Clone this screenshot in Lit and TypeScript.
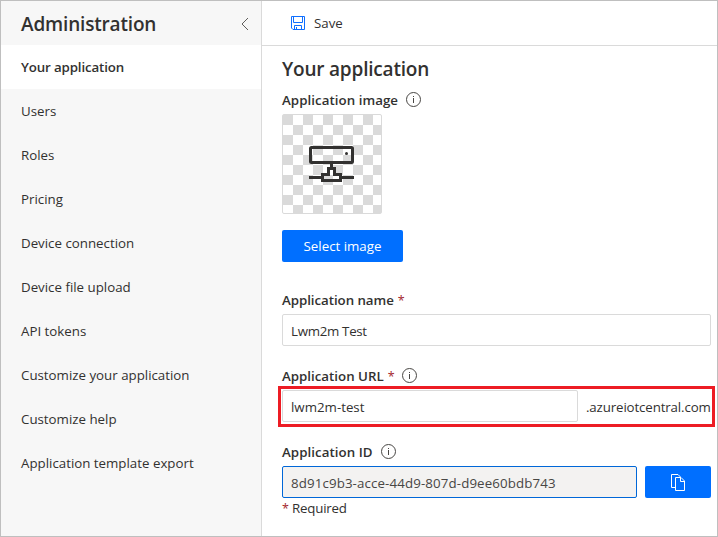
import { LitElement, html, css, svg } from "lit";
import { customElement, property } from "lit/decorators.js";

const SECTIONS = [
  "Your application",
  "Users",
  "Roles",
  "Pricing",
  "Device connection",
  "Device file upload",
  "API tokens",
  "Customize your application",
  "Customize help",
  "Application template export",
];

@customElement("info-icon")
class InfoIcon extends LitElement {
  static styles = css`
    :host { display: block; width: 15px; height: 15px; }
    .icon { display: block; }
  `;
  render() {
    return html`<svg class="icon" width="15" height="15" viewBox="0 0 15 15" fill="none" stroke="#484644">
      <circle cx="7.5" cy="7.5" r="7" />
      <path d="M7.5 6V11M7.5 4V5" />
    </svg>`;
  }
}

@customElement("field-label")
class FieldLabel extends LitElement {
  @property() text = "";
  @property({ type: Boolean }) required = false;
  @property({ type: Boolean }) info = false;
  static styles = css`
    :host { display: flex; align-items: center; height: 20px; font-weight: 600; }
    .star { color: #a4262c; margin-left: 4px; width: 6px; padding-top: 1px; font-weight: 400; font-size: 12.5px; }
    .info { margin: -1px 0 0 8px; }
  `;
  render() {
    return html`<span class="text">${this.text}</span>
      ${this.required ? html`<span class="star">*</span>` : ""}
      ${this.info ? html`<info-icon class="info"></info-icon>` : ""}`;
  }
}

@customElement("app-root")
class AppRoot extends LitElement {
  static styles = css`
    :host {
      display: flex;
      box-sizing: border-box;
      width: 718px;
      height: 537px;
      border: 1px solid #bfbfbf;
      background: #fff;
      color: #323130;
      font: 13.3px/20px "Open Sans", "Noto Sans", sans-serif;
    }
    * { box-sizing: border-box; }
    svg { display: block; }
    .side { width: 261px; background: #f7f7f7; border-right: 1px solid #dadada; flex: none; }
    .head { display: flex; align-items: center; justify-content: space-between; height: 44px; padding: 2px 12px 0 20px; }
    .title { margin: 0; font-size: 19px; line-height: 28px; font-weight: 600; letter-spacing: -0.17px; }
    .item { display: flex; align-items: center; height: 44px; padding-left: 20px; }
    .item.active { background: #fff; font-weight: 600; letter-spacing: -0.13px; }
    .main { flex: 1; min-width: 0; display: flex; flex-direction: column; }
    .bar { display: flex; align-items: center; gap: 9px; height: 45px; padding-left: 29px; border-bottom: 1px solid #dadada; }
    .body { padding: 9px 6px 0 20px; }
    .name { margin: 0 0 7px; font-size: 19px; line-height: 28px; font-weight: 600; letter-spacing: -0.2px; }
    .thumb {
      width: 100px; height: 100px; margin-top: 4px; border: 1px solid #dadada; border-radius: 2px;
      background: conic-gradient(#fff 25%, #dadada 0 50%, #fff 0 75%, #dadada 0) 0 0 / 20px 20px;
    }
    .pick {
      display: flex; align-items: center; justify-content: center; width: 121px; height: 32px;
      margin: 16px 0 28px; border-radius: 2px; background: #006fff; color: #fff;
    }
    .label-wide { letter-spacing: 0.05px; }
    .label-tight { letter-spacing: -0.05px; }
    .input {
      display: flex; align-items: center; height: 32px; padding: 2px 8px 0;
      border: 1px solid #dadada; border-radius: 2px; background: #fff;
    }
    .value-tight { letter-spacing: -0.3px; }
    .field { margin: 4px 0 20px; }
    .url { position: relative; display: flex; align-items: center; }
    .url .input { flex: none; width: 296px; margin-right: 8px; }
    .suffix { padding-top: 1px; letter-spacing: -0.13px; }
    .frame { position: absolute; inset: -4px -4px -5px -4px; border: 3px solid #ed1c24; }
    .row { display: flex; gap: 8px; margin-top: 4px; }
    .id { flex: 1; border-color: #0067d8; background: #f3f2f1; color: #484644; letter-spacing: 0.12px; }
    .copy { display: flex; align-items: center; justify-content: center; width: 66px; height: 32px; border-radius: 2px; background: #006fff; }
    .note { display: flex; gap: 5px; letter-spacing: -0.2px; }
    .mark { width: 5px; padding-top: 1px; color: #a4262c; font-size: 12.5px; }
  `;

  private device() {
    return svg`<g fill="none" stroke="#323130" stroke-width="3">
      <rect x="27.5" y="32.5" width="42" height="15" rx="1" />
      <path d="M48.5 48V53M26 62.5H39M58 62.5H71" />
      <path d="M45.5 53.5H51.5V59.5H57.5V65.5H39.5V59.5H45.5Z" />
    </g><circle cx="63.5" cy="38.5" r="1.5" fill="#323130" />`;
  }

  render() {
    return html`
      <nav class="side">
        <div class="head">
          <h1 class="title">Administration</h1>
          <svg width="8" height="14" viewBox="0 0 8 14" fill="none" stroke="#605e5c"><path d="M7 1L1 7L7 13" /></svg>
        </div>
        ${SECTIONS.map((s, i) => html`<div class="item ${i === 0 ? "active" : ""}"><span>${s}</span></div>`)}
      </nav>
      <main class="main">
        <div class="bar">
          <svg width="14" height="14" viewBox="0 0 14 14" fill="none" stroke="#0f6fff">
            <path d="M.5 .5H13.5V13.5H2L.5 12ZM2.5 .5V6.5H11.5V.5M3.5 13.5V9.5H10.5V13.5M5.5 11V13.5" />
          </svg>
          <span>Save</span>
        </div>
        <div class="body">
          <h2 class="name">Your application</h2>
          <field-label class="label-wide" text="Application image" info></field-label>
          <div class="thumb"><svg width="98" height="98" viewBox="0 0 98 98">${this.device()}</svg></div>
          <div class="pick"><span>Select image</span></div>
          <field-label class="label-tight" text="Application name" required></field-label>
          <div class="field input"><span class="value-tight">Lwm2m Test</span></div>
          <field-label text="Application URL" required info></field-label>
          <div class="field url">
            <div class="input"><span>lwm2m-test</span></div>
            <span class="suffix">.azureiotcentral.com</span>
            <div class="frame"></div>
          </div>
          <field-label class="label-wide" text="Application ID" info></field-label>
          <div class="row">
            <div class="input id"><span>8d91c9b3-acce-44d9-807d-d9ee60bdb743</span></div>
            <div class="copy">
              <svg width="16" height="17" viewBox="0 0 16 17" fill="none" stroke="#fff">
                <path d="M5.5 13.5H1.5V.5H8L10.5 3" /><path d="M5.5 3.5H11L14.5 7V16.5H5.5ZM10.5 3.5V7.5H14.5" />
              </svg>
            </div>
          </div>
          <div class="note"><span class="mark">*</span><span>Required</span></div>
        </div>
      </main>`;
  }
}
